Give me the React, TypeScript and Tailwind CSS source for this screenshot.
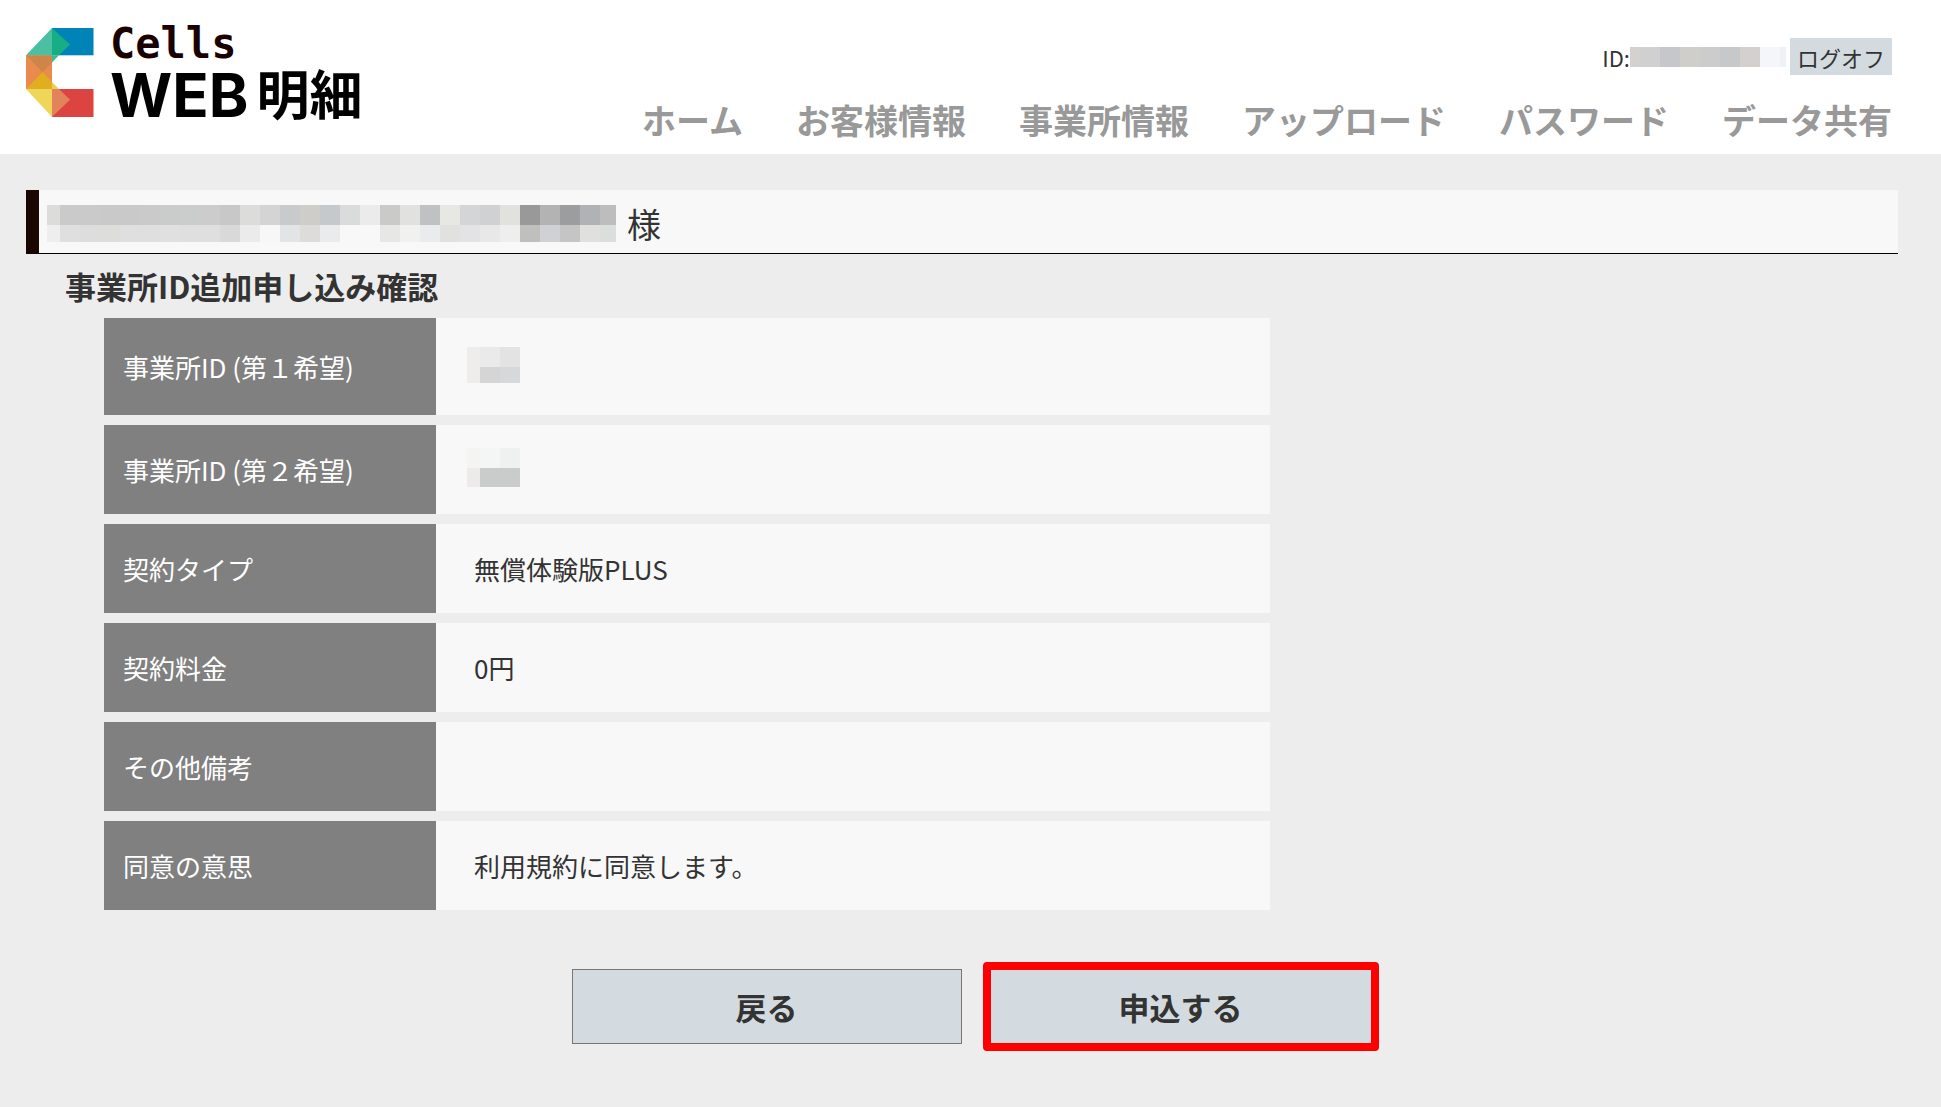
import React from 'react';

interface MosaicProps {
  firstWidth?: number;
  lastWidth?: number;
  rows: { height: number; colors: string[] }[];
}

interface DetailRow {
  label: string;
  value: React.ReactNode;
}

const TILE = 20;

const navItems = ['ホーム', 'お客様情報', '事業所情報', 'アップロード', 'パスワード', 'データ共有'];

const companyMosaic = [
  {
    height: 20,
    colors: [
      '#dcdcdb', '#cacaca', '#cacaca', '#c9c9c9', '#c9c9c9', '#cacaca', '#c9cccb', '#cbcccc', '#cccccc', '#c8c8c8',
      '#dcdcdb', '#d4d4d4', '#c8cacc', '#cecdc9', '#c6c9cb', '#dadbdb', '#ebebeb', '#cacac8', '#e1e1df', '#c0c1c2',
      '#e7e7e4', '#d3d5d7', '#d0d1d2', '#e1e1de', '#999999', '#b3b3b3', '#9c9d9f', '#b0b2b5', '#bdbdbd',
    ],
  },
  {
    height: 17,
    colors: [
      '#eeeeee', '#dfdfdf', '#dedddd', '#dddddb', '#dfdfdf', '#dfdfdf', '#e0e0e0', '#dfdfdf', '#dfdfdf', '#d9d9d9',
      '#ebebeb', '#f7f7f7', '#e3e4e5', '#dddcd9', '#e9ebed', '#f8f8f8', '#f8f8f8', '#e7e7e6', '#f1f1f0', '#e9ebec',
      '#e1e2e0', '#e3e3e5', '#e8e8e8', '#eeeeee', '#bfbfbe', '#d0d1d4', '#c5c5c6', '#e0e0de', '#dcdedd',
    ],
  },
];

const userIdMosaic = [
  {
    height: 20,
    colors: ['#d4d1d0', '#d0d0d1', '#c5c7ca', '#cfcecb', '#cccccc', '#c6c8ca', '#d3d0ce', '#f5f6f9', '#eff2f4'],
  },
];

const firstIdMosaic = [
  { height: 20, colors: ['#eeedec', '#eaeaea', '#e3e3e3'] },
  { height: 16, colors: ['#eeedec', '#d5d5d5', '#d7d8d9'] },
];

const secondIdMosaic = [
  { height: 20, colors: ['#f4f4f2', '#f4f6f5', '#eff0f0'] },
  { height: 19, colors: ['#ecebea', '#cacccc', '#cacccc'] },
];

// Masks private values with coloured tiles
const Mosaic = ({ firstWidth = TILE, lastWidth = TILE, rows }: MosaicProps) => (
  <div className="flex flex-col" aria-hidden="true">
    {rows.map((row, r) => (
      <div key={r} className="flex" style={{ height: row.height }}>
        {row.colors.map((color, i) => {
          const width = i === 0 ? firstWidth : i === row.colors.length - 1 ? lastWidth : TILE;
          return <span key={i} className="shrink-0" style={{ width, backgroundColor: color }} />;
        })}
      </div>
    ))}
  </div>
);

const LogoMark = () => (
  <svg width="68" height="89" viewBox="26 28 68 89" aria-hidden="true">
    <rect x="52" y="28" width="41.5" height="27.3" fill="#0083b6" />
    <rect x="52" y="89" width="41.5" height="28" fill="#dc4441" />
    <rect x="26" y="55.3" width="26" height="33.7" fill="#eb8a4e" />
    <polygon points="26,55.3 52,28 52,55.3" fill="#4abfa1" />
    <polygon points="52,28 70,44.5 59,55.3 52,55.3" fill="#17ae86" />
    <polygon points="52,55.3 59,55.3 52,62.5" fill="#3dbb99" />
    <polygon points="26,55.3 52,55.3 52,62.5 42.5,72.3" fill="#ce8548" />
    <polygon points="42.5,72.3 52,82 52,89 26,89" fill="#e0ae1f" />
    <polygon points="26,89 52,89 52,117" fill="#f0d658" />
    <polygon points="52,82 59,89 52,89" fill="#efcf50" />
    <polygon points="52,89 59,89 70,99.7 52,117" fill="#e3835c" />
  </svg>
);

const Header = () => (
  <header className="flex h-[154px] items-start justify-between bg-white pl-[26px] pr-[49px]">
    <a href="#" className="flex pt-7">
      <LogoMark />
      <span className="flex flex-col pl-4">
        <span className="font-['DejaVu_Sans_Mono',monospace] text-[42px] leading-8 font-bold text-[#1a0000]">Cells</span>
        <span className="flex items-start gap-2 pt-1 font-bold text-black">
          <span className="font-['Inter',sans-serif] text-[60px] leading-[62px]">WEB</span>
          <span className="text-[53px] leading-[56px]">明細</span>
        </span>
      </span>
    </a>
    <div className="flex flex-col items-end pt-[38px]">
      <div className="flex h-[37px] items-center text-[22px] leading-8">
        <span>ID:</span>
        <Mosaic firstWidth={10} lastWidth={6} rows={userIdMosaic} />
        <button type="button" className="ml-1 h-[37px] bg-[#d3dbe0] px-[7px]">
          ログオフ
        </button>
      </div>
      <nav className="flex gap-[53px] pt-[21px] text-[34px] leading-[48px] font-bold whitespace-nowrap text-[#999999]">
        {navItems.map(item => (
          <a key={item} href="#">
            {item}
          </a>
        ))}
      </nav>
    </div>
  </header>
);

const details: DetailRow[] = [
  {
    label: '事業所ID (第１希望)',
    value: <Mosaic firstWidth={13} rows={firstIdMosaic} />,
  },
  {
    label: '事業所ID (第２希望)',
    value: <Mosaic firstWidth={13} rows={secondIdMosaic} />,
  },
  { label: '契約タイプ', value: '無償体験版PLUS' },
  { label: '契約料金', value: '0円' },
  { label: 'その他備考', value: '' },
  { label: '同意の意思', value: '利用規約に同意します。' },
];

const DetailTable = () => (
  <table className="ml-[78px] w-full max-w-[1166px] table-fixed border-collapse text-[26px] leading-10">
    <tbody>
      {details.map(({ label, value }) => (
        <tr key={label} className="h-[99px] border-b-10 border-[#ededed] first:h-[102px]">
          <th scope="row" className="w-[332px] bg-[#808080] pl-[19px] text-left font-normal text-white">
            {label}
          </th>
          <td className={typeof value === 'string' ? 'bg-[#f8f8f8] pl-[38px]' : 'bg-[#f8f8f8] pb-1 pl-[31px]'}>
            {value}
          </td>
        </tr>
      ))}
    </tbody>
  </table>
);

const App = () => {
  return (
    <div className="min-h-screen bg-[#ededed] font-['Noto_Sans_CJK_JP',sans-serif] text-[#333333]">
      <Header />
      <main className="pt-9 pr-[43px] pb-10 pl-[26px]">
        <h1 className="flex h-16 items-center border-b border-l-13 border-b-black border-l-[#1a0800] bg-[#f8f8f8] pt-1 pl-2 text-[34px] leading-[48px]">
          <Mosaic firstWidth={13} lastWidth={16} rows={companyMosaic} />
          <span className="pl-[11px]">様</span>
        </h1>
        <h2 className="pt-2 pb-2 pl-[39px] text-[31px] leading-[48px] font-bold">事業所ID追加申し込み確認</h2>
        <DetailTable />
        <div className="flex items-center justify-center gap-[21px] pt-[42px] pl-[26px] text-[31px] leading-[48px] font-bold">
          <button type="button" className="h-[75px] w-[390px] border border-[#777777] bg-[#d3dbe0]">
            戻る
          </button>
          <button type="button" className="h-[89px] w-[396px] rounded-[4px] border-8 border-[#ff0000] bg-[#d3dbe0]">
            申込する
          </button>
        </div>
      </main>
    </div>
  );
};

export default App;
